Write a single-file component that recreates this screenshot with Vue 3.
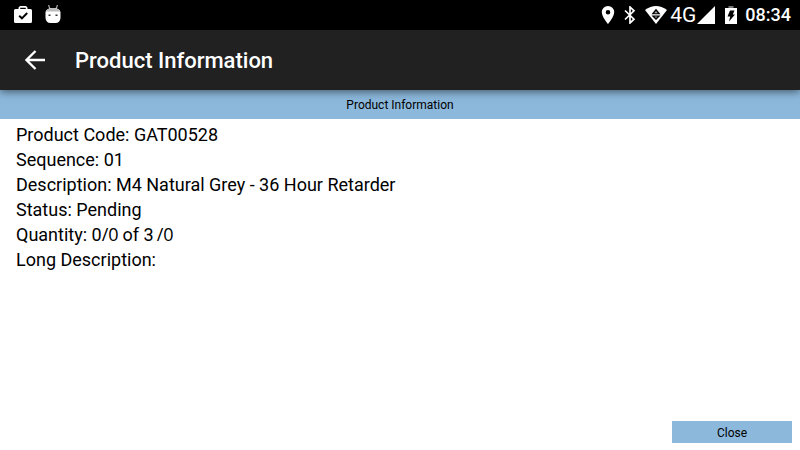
<script setup>
const title = 'Product Information'
const details = [
  { label: 'Product Code', value: 'GAT00528' },
  { label: 'Sequence', value: '01' },
  { label: 'Description', value: 'M4 Natural Grey - 36 Hour Retarder' },
  { label: 'Status', value: 'Pending' },
]
const quantity = { done: 0, doneExtra: 0, total: 3, totalExtra: 0 }
</script>

<template>
  <div class="screen">
    <div class="status-bar">
      <div class="notifications">
        <svg width="18" height="18" viewBox="0 0 18 18" aria-hidden="true">
          <path fill="#fff" fill-rule="evenodd" d="M6 0h6l1.500 1.500V3H16.500Q18 3 18 4.500V15.500Q18 17 16.500 17H1.500Q0 17 0 15.500V4.500Q0 3 1.500 3H4.500V1.500ZM6.200 1.700V3h5.600V1.700Z" />
          <path d="M5.200 9.700 7.900 12.300 13.200 7" fill="none" stroke="#000" stroke-width="1.900" />
        </svg>
        <svg width="16" height="20" viewBox="0 0 16 20" aria-hidden="true">
          <path d="M3.500 0 5 4M12.500 0 11 4" stroke="#aaa" stroke-width="1.200" />
          <path d="M.5 7Q1.500 3 8 3t7.500 4V13Q15 18 10.500 18h-5Q1 18 .5 13Z" fill="#fff" />
          <path d="M.8 6.500Q2.500 3 8 3t7.200 3.500Z" fill="#bbb" />
          <path d="M3.500 9.500h2v1.500h-2zM10.500 9.500h2v1.500h-2z" fill="#333" />
        </svg>
      </div>
      <div class="system">
        <svg width="14" height="18" viewBox="0 0 14 18" aria-hidden="true">
          <path fill="#fff" fill-rule="evenodd" d="M7 0a6.200 6.200 0 0 0-6.200 6.200C.8 10.700 7 18 7 18s6.200-7.300 6.200-11.800A6.200 6.200 0 0 0 7 0Zm0 4a2.300 2.300 0 1 1 0 4.600A2.300 2.300 0 0 1 7 4Z" />
        </svg>
        <svg width="12" height="18" viewBox="0 0 12 18" aria-hidden="true">
          <path d="M1 4.500 10 13.200 6 17V1l4 3.800L1 13.500" fill="none" stroke="#fff" stroke-width="1.700" />
        </svg>
        <svg width="22" height="18" viewBox="0 0 22 18" aria-hidden="true">
          <path d="M0 4Q11-4 22 4L11 18Z" fill="#fff" />
          <path d="M11 2.800 15.500 8.200h-9ZM6.500 9.500h9L11 14Z" fill="#000" />
          <path d="M11 5 9.200 7.200h3.600ZM9.500 10.500h3L11 12Z" fill="#aaa" />
        </svg>
        <span class="network">4G</span>
        <svg width="18" height="18" viewBox="0 0 18 18" aria-hidden="true">
          <path d="M18 0V18H0Z" fill="#fff" />
        </svg>
        <svg class="battery" width="12" height="18" viewBox="0 0 12 18" aria-hidden="true">
          <path d="M3.500 0h5v2h-5z" fill="#777" />
          <path d="M0 2h12v16H0z" fill="#fff" />
          <path d="M5 4.500h4.500L7.800 8.500H10L4 15.500 5.200 10.500H2.500Z" fill="#000" />
        </svg>
        <time class="clock">08:34</time>
      </div>
    </div>

    <header class="app-bar">
      <button class="back" type="button" aria-label="Back">
        <svg width="20" height="20" viewBox="0 0 20 20" aria-hidden="true">
          <path d="M20 10H2M10.500 1 1.500 10l9 9" fill="none" stroke="#fff" stroke-width="2.300" />
        </svg>
      </button>
      <h1>{{ title }}</h1>
    </header>

    <main>
      <h2>{{ title }}</h2>
      <div class="details">
        <p v-for="row in details" :key="row.label">{{ row.label }}: {{ row.value }}</p>
        <p class="quantity">
          <span>Quantity: {{ quantity.done }}</span>
          <span class="extra">/{{ quantity.doneExtra }}</span>
          <span class="total">of {{ quantity.total }}</span>
          <span class="extra">/{{ quantity.totalExtra }}</span>
        </p>
        <p>Long Description:</p>
      </div>
    </main>

    <footer>
      <button class="close" type="button">Close</button>
    </footer>
  </div>
</template>

<style>
body {
  margin: 0;
  background: #fff;
}
</style>

<style scoped>
.screen {
  display: flex;
  flex-direction: column;
  min-height: 100vh;
  font-family: Roboto, "Liberation Sans", sans-serif;
  color: #000;
}
svg {
  display: block;
  flex: none;
}
.status-bar {
  display: flex;
  justify-content: space-between;
  align-items: center;
  height: 30px;
  padding: 0 9px 0 14px;
  background: #000;
  color: #fff;
}
.notifications {
  display: flex;
  align-items: center;
  gap: 13px;
}
.system {
  display: flex;
  align-items: center;
}
.system svg + svg {
  margin-left: 9px;
}
.network {
  margin: 0 1px 0 3px;
  font-size: 21px;
  line-height: 30px;
}
.system .battery {
  margin-left: 10px;
}
.clock {
  margin-left: 8px;
  font-size: 18px;
  font-weight: 500;
  line-height: 30px;
}
.app-bar {
  position: relative;
  display: flex;
  align-items: center;
  gap: 20px;
  height: 60px;
  padding-left: 15px;
  background: #212121;
  box-shadow: 0 2px 8px rgba(0, 0, 0, 0.5);
  color: #fff;
}
.back {
  display: grid;
  place-items: center;
  width: 40px;
  height: 40px;
  padding: 0;
  border: 0;
  background: none;
}
h1 {
  margin: 0;
  padding-top: 2px;
  font-size: 22px;
  font-weight: 500;
  line-height: 32px;
}
main {
  flex: 1;
}
h2 {
  margin: 0;
  padding-top: 2px;
  background: #8cb8dc;
  font-size: 12px;
  font-weight: 400;
  line-height: 27px;
  text-align: center;
}
.details {
  padding: 3px 16px;
}
p {
  margin: 0;
  font-size: 18px;
  line-height: 25px;
}
.quantity {
  display: flex;
}
.extra {
  font-family: "Open Sans", sans-serif;
}
.total {
  margin: 0 3px 0 4px;
}
footer {
  display: flex;
  justify-content: flex-end;
  padding: 0 8px 7px;
}
.close {
  width: 120px;
  height: 22px;
  padding: 2px 0 0;
  border: 0;
  background: #8cb8dc;
  color: #000;
  font-family: inherit;
  font-size: 12px;
}
</style>
